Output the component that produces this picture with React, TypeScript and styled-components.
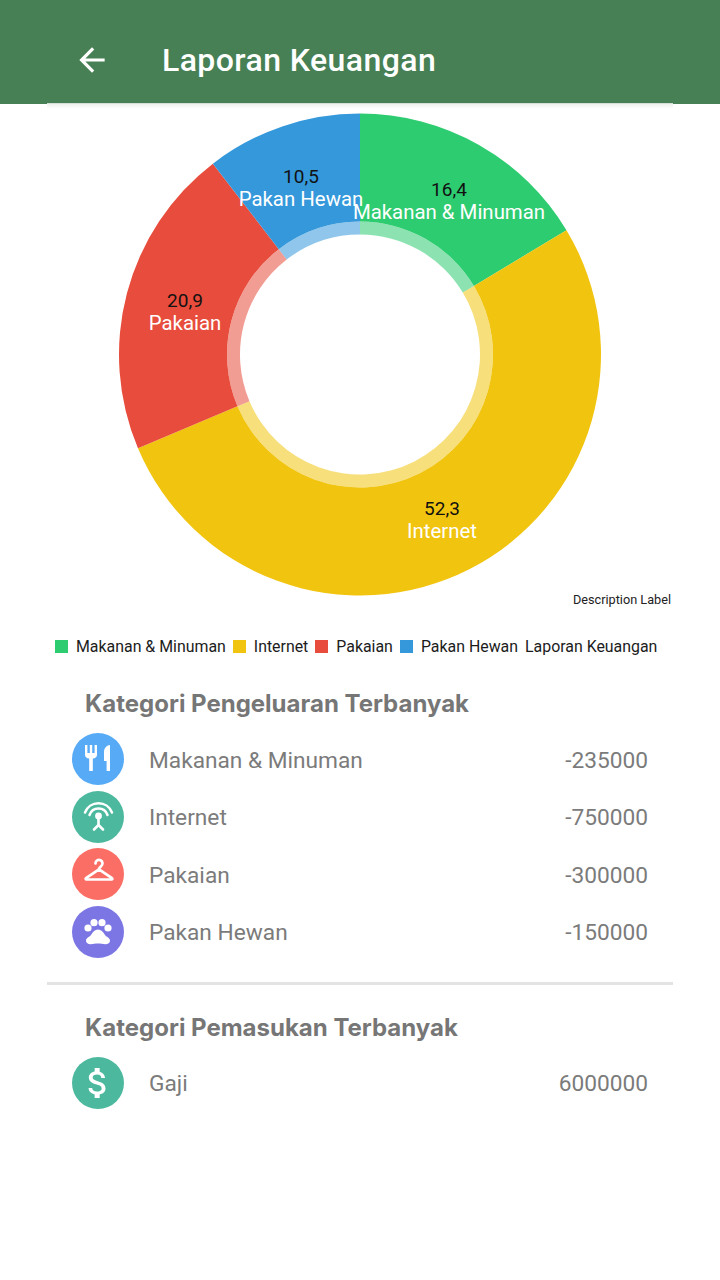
import React from "react";
import styled, { createGlobalStyle } from "styled-components";
import { MdAttachMoney, MdArrowBack } from "react-icons/md";

const Global = createGlobalStyle`
  html, body { margin: 0; padding: 0; background: #fff; }
  body { font-family: Roboto, "Liberation Sans", sans-serif; }
`;

const Page = styled.div`
  width: 720px;
  height: 1280px;
  background: #fff;
  overflow: hidden;
  display: flex;
  flex-direction: column;
`;
const Header = styled.header`
  height: 104px;
  flex: none;
  background: #478054;
  display: flex;
  align-items: center;
  gap: 51px;
  padding: 15px 0 0 73px;
  box-sizing: border-box;
  color: #fff;
`;
const BackButton = styled.span`
  display: flex;
  width: 38px;
  justify-content: center;
`;
const Title = styled.h1`
  margin: 0;
  font-size: 32px;
  font-weight: 500;
  letter-spacing: 0.42px;
  line-height: 36px;
`;
const Body = styled.main`
  margin: 0 47px;
  display: flex;
  flex-direction: column;
`;
const TopShade = styled.div`
  height: 6px;
  margin-top: -1px;
  background: linear-gradient(#c4d3c8 0, #eef1ee 20%, #fff 100%);
`;
const ChartWrap = styled.section`
  position: relative;
  height: 526px;
  margin-top: -4px;
`;
const ChartSvg = styled.svg`
  display: block;
  width: 626px;
  height: 526px;
`;
const Description = styled.span`
  position: absolute;
  right: 2px;
  top: 488px;
  font-size: 12.7px;
  line-height: 14px;
  color: #222;
`;
const Legend = styled.div`
  display: flex;
  align-items: center;
  gap: 7px;
  padding-left: 8px;
  height: 30px;
  margin-bottom: 26px;
`;
const LegendItem = styled.div`
  display: flex;
  align-items: center;
  gap: 8px;
  font-size: 15.9px;
  color: #1c1c1c;
  white-space: nowrap;
`;
const Swatch = styled.i<{ $c: string }>`
  width: 13px;
  height: 13px;
  background: ${(p) => p.$c};
`;
const Section = styled.section`
  display: flex;
  flex-direction: column;
  padding: 0 25px;
`;
const SectionTitle = styled.h2`
  margin: 0 0 12px 13px;
  font-family: Inter, "Open Sans", sans-serif;
  font-size: 24px;
  line-height: 34px;
  font-weight: 700;
  color: #767676;
  white-space: nowrap;
`;
const Rows = styled.div`
  display: flex;
  flex-direction: column;
  gap: 5.5px;
`;
const Row = styled.div`
  display: flex;
  align-items: center;
  height: 52px;
  font-size: 22.7px;
  color: #7b7b7b;
`;
const IconCircle = styled.span<{ $c: string }>`
  width: 52px;
  height: 52px;
  border-radius: 50%;
  background: ${(p) => p.$c};
  display: flex;
  align-items: center;
  justify-content: center;
  color: #fff;
  flex: none;
`;
const RowName = styled.span`
  margin-left: 25px;
  padding-top: 2px;
  flex: 1;
`;
const RowValue = styled.span`
  padding-top: 2px;
`;
const Divider = styled.hr`
  margin: 24px 0 26px;
  border: 0;
  height: 3px;
  background: #e3e3e3;
`;

const C = { cx: 313, cy: 249.5 };
const polar = (r: number, pct: number) => {
  const a = (pct / 100) * 2 * Math.PI;
  return [C.cx + r * Math.sin(a), C.cy - r * Math.cos(a)];
};
const arc = (r0: number, r1: number, from: number, to: number) => {
  const [a, b] = polar(r1, from);
  const [c, d] = polar(r1, to);
  const [e, f] = polar(r0, to);
  const [g, h] = polar(r0, from);
  const large = to - from > 50 ? 1 : 0;
  return `M${a} ${b}A${r1} ${r1} 0 ${large} 1 ${c} ${d}L${e} ${f}A${r0} ${r0} 0 ${large} 0 ${g} ${h}Z`;
};

const data = [
  { name: "Makanan & Minuman", c: "#2ecc71", v: 235000, pct: "16,4", x: 402, y: 108 },
  { name: "Internet", c: "#f1c40f", v: 750000, pct: "52,3", x: 395, y: 427 },
  { name: "Pakaian", c: "#e74c3c", v: 300000, pct: "20,9", x: 138, y: 219 },
  { name: "Pakan Hewan", c: "#3498db", v: 150000, pct: "10,5", x: 254, y: 95 },
];
const total = data.reduce((s, d) => s + d.v, 0);

const Slices = () => {
  let acc = 0;
  return (
    <>
      {data.map((d) => {
        const from = acc;
        acc += (d.v / total) * 100;
        return (
          <g key={d.name}>
            <path d={arc(133, 241, from, acc)} fill={d.c} />
            <path d={arc(120, 133, from, acc)} fill={d.c} opacity={0.55} />
          </g>
        );
      })}
    </>
  );
};

const Glyph = styled.svg`
  display: block;
  width: 34px;
  height: 34px;
`;

const CutleryIcon = () => (
  <Glyph viewBox="0 0 34 34" fill="#fff">
    <path d="M4 3H6.4V11H8.8V3H11.2V11H13.6V3H16V12.5a4.5 4 0 0 1-4.2 4V29H8.2V16.5A4.5 4 0 0 1 4 12.5Z" />
    <path d="M29 3V29H25.6V19H23V10C23 6 26 3 29 3Z" />
  </Glyph>
);
const InternetIcon = () => (
  <Glyph viewBox="0 0 34 34" fill="none" stroke="#fff" strokeLinecap="round">
    <path d="M4 12.5A14.5 14.5 0 0 1 31 12.5" strokeWidth="2.5" />
    <path d="M8.5 15A9.5 9.5 0 0 1 26.5 15" strokeWidth="2.5" />
    <circle cx="17.5" cy="16" r="3.4" fill="#fff" stroke="none" />
    <path d="M17.5 18v7M17.5 25l-4.5 4.5M17.5 25l4.5 4.5" strokeWidth="2.6" />
  </Glyph>
);
const HangerIcon = () => (
  <Glyph viewBox="0 0 34 34" fill="none" stroke="#fff" strokeWidth="2.7" strokeLinecap="round" strokeLinejoin="round">
    <path d="M14.5 6.5a3.5 3.5 0 1 1 5.5 2.8c-1.2.9-2 1.6-2 3" />
    <path d="M18 12.3L5 21.2a.7.7 0 0 0 .4 1.3h25.2a.7.7 0 0 0 .4-1.3z" />
  </Glyph>
);
const PawIcon = () => (
  <Glyph viewBox="0 0 34 34" fill="#fff">
    <circle cx="7" cy="13" r="3.6" />
    <circle cx="13" cy="7.7" r="3.6" />
    <circle cx="21" cy="7.7" r="3.6" />
    <circle cx="27" cy="13" r="3.6" />
    <path d="M17 14.5c3.2 0 5 2.2 6.5 4.7s5.5 3.6 5.5 6.3-2 3.7-4.5 3.7c-2.7 0-5-.7-7.5-.7s-4.8.7-7.5.7c-2.5 0-4.5-1-4.5-3.7s4-3.8 5.5-6.3 3.3-4.7 6.5-4.7Z" />
  </Glyph>
);

const spend = [
  { name: "Makanan & Minuman", v: "-235000", c: "#56aaf6", icon: <CutleryIcon /> },
  { name: "Internet", v: "-750000", c: "#4cb99f", icon: <InternetIcon /> },
  { name: "Pakaian", v: "-300000", c: "#fb6e66", icon: <HangerIcon /> },
  { name: "Pakan Hewan", v: "-150000", c: "#7b76e4", icon: <PawIcon /> },
];

export default function App() {
  return (
    <Page>
      <Global />
      <Header>
        <BackButton>
          <MdArrowBack size={38} />
        </BackButton>
        <Title>Laporan Keuangan</Title>
      </Header>
      <Body>
        <TopShade />
        <ChartWrap>
          <ChartSvg viewBox="0 0 626 526">
            <Slices />
            {data.map((d) => (
              <g key={d.name} textAnchor="middle" fontFamily="Roboto, sans-serif" fontSize="19">
                <text x={d.x} y={d.y - 17} fill="#111">{d.pct}</text>
                <text x={d.x} y={d.y + 6} fill="#fff" fontSize="20.4">{d.name}</text>
              </g>
            ))}
          </ChartSvg>
          <Description>Description Label</Description>
        </ChartWrap>
        <Legend>
          {data.map((d) => (
            <LegendItem key={d.name}>
              <Swatch $c={d.c} />
              {d.name}
            </LegendItem>
          ))}
          <LegendItem>Laporan Keuangan</LegendItem>
        </Legend>
        <Section>
          <SectionTitle>Kategori Pengeluaran Terbanyak</SectionTitle>
          <Rows>
            {spend.map((r) => (
              <Row key={r.name}>
                <IconCircle $c={r.c}>{r.icon}</IconCircle>
                <RowName>{r.name}</RowName>
                <RowValue>{r.v}</RowValue>
              </Row>
            ))}
          </Rows>
        </Section>
        <Divider />
        <Section>
          <SectionTitle>Kategori Pemasukan Terbanyak</SectionTitle>
          <Row>
            <IconCircle $c="#4cb99f">
              <MdAttachMoney size={40} />
            </IconCircle>
            <RowName>Gaji</RowName>
            <RowValue>6000000</RowValue>
          </Row>
        </Section>
      </Body>
    </Page>
  );
}
